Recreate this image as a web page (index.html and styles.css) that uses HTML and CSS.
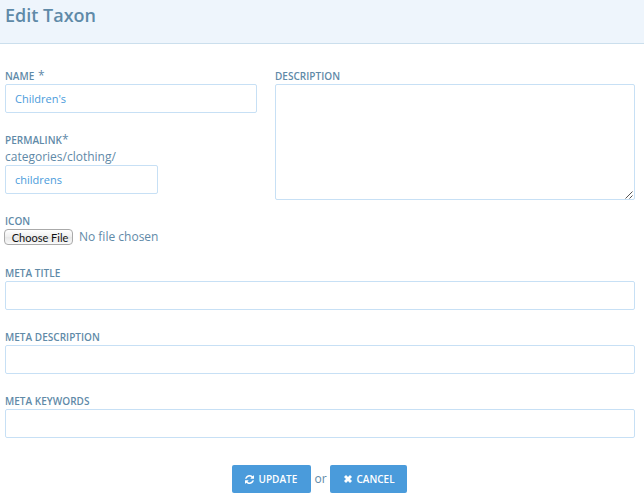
FILE: index.html
```html
<!DOCTYPE html>
<html lang="en">
<head>
<meta charset="utf-8">
<title>Edit Taxon</title>
<link rel="stylesheet" href="styles.css">
</head>
<body>
<header class="page-header"><h1 class="page-title">Edit Taxon</h1></header>
<form class="taxon-form">
  <div class="columns">
    <div class="column">
      <div class="field">
        <label class="label" for="name">Name <span class="required spaced">*</span></label>
        <input class="input" id="name" type="text" value="Children's">
      </div>
      <div class="field">
        <label class="label" for="permalink">Permalink<span class="required">*</span></label>
        <div class="prefix">categories/clothing/</div>
        <input class="input input-short" id="permalink" type="text" value="childrens">
      </div>
      <div class="field">
        <span class="label">Icon</span>
        <div class="file-row">
          <button class="file-button" type="button">Choose File</button>
          <span class="file-status">No file chosen</span>
        </div>
      </div>
    </div>
    <div class="field description">
      <label class="label" for="description">Description</label>
      <textarea class="input textarea" id="description"></textarea>
      <svg class="grip" width="8" height="8" viewBox="0 0 8 8"><path d="M0.5 7.5L7.5 0.5M4.5 7.5L7.5 4.5"/></svg>
    </div>
  </div>
  <div class="field">
    <label class="label" for="meta-title">Meta Title</label>
    <input class="input" id="meta-title" type="text">
  </div>
  <div class="field">
    <label class="label" for="meta-description">Meta Description</label>
    <input class="input" id="meta-description" type="text">
  </div>
  <div class="field">
    <label class="label" for="meta-keywords">Meta Keywords</label>
    <input class="input" id="meta-keywords" type="text">
  </div>
  <div class="actions">
    <button class="button update" type="button"><svg class="icon" width="9" height="9" viewBox="0 0 1536 1536"><path d="M1511 928q0 5-1 7-64 268-268 434.500T764 1536q-146 0-282.500-55T238 1324l-129 129q-19 19-45 19t-45-19-19-45V960q0-26 19-45t45-19h448q26 0 45 19t19 45-19 45l-137 137q71 66 161 102t187 36q134 0 250-65t186-179q11-17 53-117 8-23 30-23h192q13 0 22.500 9.500t9.500 22.500zm25-800v448q0 26-19 45t-45 19h-448q-26 0-45-19t-19-45 19-45l138-138Q969 256 768 256q-134 0-250 65T332 500q-11 17-53 117-8 23-30 23H50q-13 0-22.500-9.500T18 608v-7q65-268 270-434.500T768 0q146 0 284 55.500T1297 212l130-129q19-19 45-19t45 19 19 45z"/></svg><span>Update</span></button>
    <span class="or">or</span>
    <button class="button cancel" type="button"><svg class="icon" width="8" height="8" viewBox="0 0 8 8"><path d="M2 0L4 2L6 0L8 2L6 4L8 6L6 8L4 6L2 8L0 6L2 4L0 2Z"/></svg><span>Cancel</span></button>
  </div>
</form>
</body>
</html>
```
FILE: styles.css
```css
* {
  box-sizing: border-box;
}

body {
  margin: 0;
  background: #fff;
  color: #5f8aa8;
  font: 12px/16px "Open Sans", sans-serif;
}

.page-header {
  height: 44px;
  padding: 3px 5px;
  background: #eef5fc;
  border-bottom: 1px solid #cbdfed;
}

.page-title {
  margin: 0;
  font-size: 18px;
  line-height: 25px;
  font-weight: 600;
}

.taxon-form {
  display: flex;
  flex-direction: column;
  gap: 19px;
  padding: 24px 9px 0 5px;
}

.columns {
  display: grid;
  grid-template-columns: 252px 360px;
  column-gap: 18px;
}

.column {
  display: flex;
  flex-direction: column;
  gap: 19px;
}

.label {
  display: block;
  height: 16px;
  font-size: 10px;
  line-height: 17px;
  font-weight: 600;
  letter-spacing: 0.03px;
  text-transform: uppercase;
}

.required {
  font-size: 12px;
  line-height: 1;
  font-weight: 400;
}

.spaced {
  margin-left: 1px;
}

.input {
  display: block;
  width: 100%;
  height: 29px;
  margin: 0;
  padding: 0 9px;
  border: 1px solid #c7e0f5;
  border-radius: 2px;
  outline: 0;
  background: #fff;
  color: #4a9bdb;
  font: 11px "Open Sans", sans-serif;
}

.input-short {
  width: 153px;
}

.prefix {
  height: 17px;
  line-height: 17px;
}

.description {
  position: relative;
  align-self: start;
}

.textarea {
  height: 116px;
  resize: none;
}

.grip {
  position: absolute;
  right: 2px;
  bottom: 1px;
  fill: none;
  stroke: #555;
}

.file-row {
  display: flex;
  align-items: flex-start;
  gap: 6px;
  height: 17px;
}

.file-button {
  width: 69px;
  height: 16px;
  margin-left: -1px;
  padding: 1px 0 0 3px;
  border: 1px solid #aaa;
  border-radius: 4px;
  background: linear-gradient(#fff, #eee 50%, #e7e7e7 51%, #fafafa);
  color: #111;
  font: 11px/13px "Lato", sans-serif;
  white-space: nowrap;
}

.actions {
  display: flex;
  justify-content: center;
  align-items: center;
  height: 28px;
  margin: 8px 2px 0 0;
}

.button {
  display: flex;
  align-items: center;
  gap: 5px;
  height: 28px;
  border: 0;
  border-radius: 2px;
  background: #4a9bdb;
  color: #fff;
  font: 600 10px "Open Sans", sans-serif;
  text-transform: uppercase;
}

.update {
  width: 79px;
  padding: 0 0 0 13px;
}

.cancel {
  width: 77px;
  padding: 0 0 0 14px;
}

.or {
  width: 19px;
  padding-left: 1px;
  text-align: center;
}

.icon {
  fill: #fff;
}
```
